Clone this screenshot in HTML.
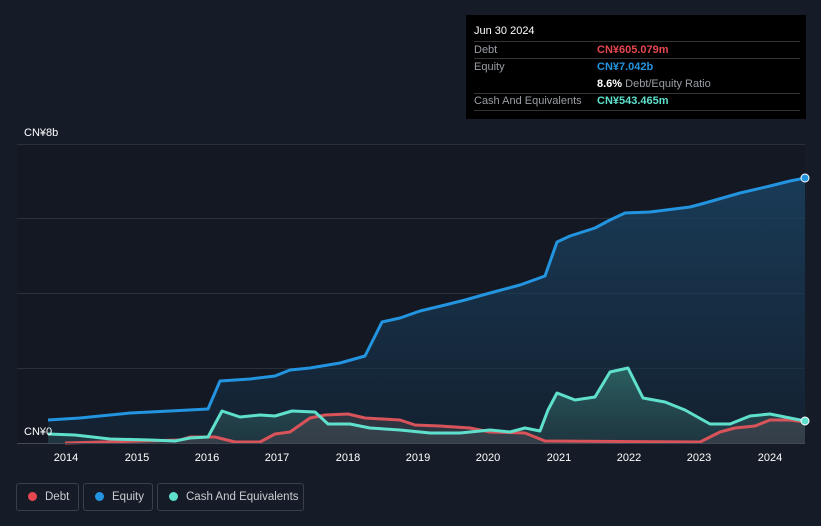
<!DOCTYPE html>
<html><head><meta charset="utf-8"><style>
html,body{margin:0;width:821px;height:526px;overflow:hidden}
body{background:#161c27;font-family:"Liberation Sans",sans-serif;position:relative}
.tt{position:absolute;left:466px;top:15px;width:340px;height:104px;background:#000;color:#fff;font-size:11px}
.tt .r{position:absolute;left:8px;right:6px;border-top:1px solid #333}
.lab{color:#9a9ea6}
.leg{position:absolute;top:483px;height:28px;border:1px solid #3a404b;border-radius:3px;color:#c9ccd1;font-size:11.5px;line-height:26px;box-sizing:border-box;white-space:nowrap}
.dot{display:inline-block;width:9px;height:9px;border-radius:50%;margin:0 8px 0 11px;vertical-align:-1px}
</style></head><body>
<svg width="821" height="526" style="position:absolute;left:0;top:0">
<defs>
<linearGradient id="ge" x1="0" y1="0" x2="0" y2="1"><stop offset="0" stop-color="#1c4a6e" stop-opacity=".7"/><stop offset="1" stop-color="#14273a" stop-opacity=".6"/></linearGradient>
<linearGradient id="gc" x1="0" y1="0" x2="0" y2="1"><stop offset="0" stop-color="#2f6e6a" stop-opacity=".8"/><stop offset="1" stop-color="#2a4a50" stop-opacity=".5"/></linearGradient>
</defs>
<rect x="17" y="144" width="788" height="299" fill="#131822"/>
<g stroke="#2a303a" stroke-width="1"><line x1="17" y1="144.5" x2="805" y2="144.5"/><line x1="17" y1="218.5" x2="805" y2="218.5"/><line x1="17" y1="293.5" x2="805" y2="293.5"/><line x1="17" y1="368.5" x2="805" y2="368.5"/></g>
<path fill="url(#ge)" d="M48,420 L80,418 100,416 130,413 170,411 208,409 220,381 250,379 275,376 290,370 310,368 340,363 365,356 382,322 400,318 420,311 445,305 465,300 490,293 520,285 545,276 557,242 570,236 595,228 610,220 625,213 650,212 690,207 705,203 740,193 770,186 790,181 805,178 L805,443 48,443Z"/>
<path fill="url(#gc)" d="M48,434 L75,435 110,439 150,440 175,441 190,438 208,437 222,411 240,417 260,415 275,416 292,411 315,412 328,424 350,424 370,428 400,430 430,433 460,433 490,430 510,432 525,428 540,431 548,410 557,393 575,400 595,397 610,372 628,368 643,398 665,402 685,410 710,424 730,424 750,416 770,414 790,418 805,421 L805,443 48,443Z"/>
<path fill="#4a4550" fill-opacity=".5" d="M65,443 L180,440 190,437 215,437 235,442 260,442 275,434 290,432 310,418 325,415 348,414 365,418 400,420 415,425 440,426 470,428 490,432 525,433 545,441 700,442 720,432 735,428 755,426 770,420 790,420 805,422 L805,443Z"/>
<path fill="none" stroke="#2394df" stroke-width="3" stroke-linejoin="round" d="M48,420 L80,418 100,416 130,413 170,411 208,409 220,381 250,379 275,376 290,370 310,368 340,363 365,356 382,322 400,318 420,311 445,305 465,300 490,293 520,285 545,276 557,242 570,236 595,228 610,220 625,213 650,212 690,207 705,203 740,193 770,186 790,181 805,178"/>
<path fill="none" stroke="#d8545a" stroke-width="3" stroke-linejoin="round" d="M65,443 L180,440 190,437 215,437 235,442 260,442 275,434 290,432 310,418 325,415 348,414 365,418 400,420 415,425 440,426 470,428 490,432 525,433 545,441 700,442 720,432 735,428 755,426 770,420 790,420 805,422"/>
<path fill="none" stroke="#5fe0cc" stroke-width="3" stroke-linejoin="round" d="M48,434 L75,435 110,439 150,440 175,441 190,438 208,437 222,411 240,417 260,415 275,416 292,411 315,412 328,424 350,424 370,428 400,430 430,433 460,433 490,430 510,432 525,428 540,431 548,410 557,393 575,400 595,397 610,372 628,368 643,398 665,402 685,410 710,424 730,424 750,416 770,414 790,418 805,421"/>
<line x1="17" y1="443.5" x2="805" y2="443.5" stroke="#444a55"/>
<circle cx="805" cy="178" r="4" fill="#2394df" stroke="#fff" stroke-width="1"/>
<circle cx="805" cy="421" r="4" fill="#5fe0cc" stroke="#fff" stroke-width="1"/>
<g fill="#fff" font-size="11" text-anchor="middle" font-family="Liberation Sans">
<text x="66" y="461">2014</text><text x="137" y="461">2015</text><text x="207" y="461">2016</text><text x="277" y="461">2017</text><text x="348" y="461">2018</text><text x="418" y="461">2019</text><text x="488" y="461">2020</text><text x="559" y="461">2021</text><text x="629" y="461">2022</text><text x="699" y="461">2023</text><text x="770" y="461">2024</text>
</g>
<text x="24" y="136" fill="#fff" font-size="11" font-family="Liberation Sans">CN¥8b</text>
<text x="24" y="435" fill="#fff" font-size="11" font-family="Liberation Sans">CN¥0</text>
</svg>
<div class="tt">
<div style="position:absolute;left:8px;top:10px">Jun 30 2024</div>
<div class="r" style="top:26px"></div>
<div class="lab" style="position:absolute;left:8px;top:29px">Debt</div><div style="position:absolute;left:131px;top:29px;color:#e5474e;font-weight:bold">CN¥605.079m</div>
<div class="r" style="top:43px"></div>
<div class="lab" style="position:absolute;left:8px;top:46px">Equity</div><div style="position:absolute;left:131px;top:46px;color:#2394df;font-weight:bold">CN¥7.042b</div>
<div style="position:absolute;left:131px;top:63px"><b>8.6%</b> <span class="lab">Debt/Equity Ratio</span></div>
<div class="r" style="top:78px"></div>
<div class="lab" style="position:absolute;left:8px;top:80px">Cash And Equivalents</div><div style="position:absolute;left:131px;top:80px;color:#5fe0cc;font-weight:bold">CN¥543.465m</div>
<div class="r" style="top:95px"></div>
</div>
<div class="leg" style="left:16px;width:63px"><span class="dot" style="background:#e5474e"></span>Debt</div>
<div class="leg" style="left:83px;width:70px"><span class="dot" style="background:#2394df"></span>Equity</div>
<div class="leg" style="left:157px;width:147px"><span class="dot" style="background:#5fe0cc"></span>Cash And Equivalents</div>
</body></html>
